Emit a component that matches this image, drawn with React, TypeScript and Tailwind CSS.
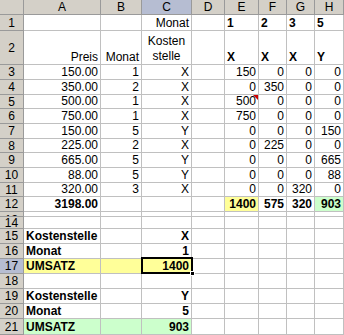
import React from 'react';

type Cell = { v?: string; a?: 'l' | 'r' | 'c'; b?: boolean; bg?: string; note?: boolean; sel?: boolean; wrap?: boolean };
type Row = { n: string; h: string; cells: Record<string, Cell>; hl?: boolean; clip?: 'top' | 'bottom' };

const COLS = ['A', 'B', 'C', 'D', 'E', 'F', 'G', 'H'];

const YELLOW = 'bg-[#ffff99]';
const GREEN = 'bg-[#ccffcc]';

const prices = ['150.00', '350.00', '500.00', '750.00', '150.00', '225.00', '665.00', '88.00', '320.00'];
const months = ['1', '2', '1', '1', '5', '2', '5', '5', '3'];
const kst = ['X', 'X', 'X', 'X', 'Y', 'X', 'Y', 'Y', 'X'];
const e = ['150', '0', '500', '750', '0', '0', '0', '0', '0'];
const f = ['0', '350', '0', '0', '0', '225', '0', '0', '0'];
const g = ['0', '0', '0', '0', '0', '0', '0', '0', '320'];
const hh = ['0', '0', '0', '0', '150', '0', '665', '88', '0'];
const dataHeights = ['h-[15px]', 'h-[15px]', 'h-[14px]', 'h-[15px]', 'h-[15px]', 'h-[14px]', 'h-[15px]', 'h-[15px]', 'h-[14px]'];

const rows: Row[] = [
  {
    n: '1',
    h: 'h-[16px]',
    cells: {
      C: { v: 'Monat', a: 'r' },
      E: { v: '1', a: 'l', b: true },
      F: { v: '2', a: 'l', b: true },
      G: { v: '3', a: 'l', b: true },
      H: { v: '5', a: 'l', b: true },
    },
  },
  {
    n: '2',
    h: 'h-[34px]',
    cells: {
      A: { v: 'Preis', a: 'r' },
      B: { v: 'Monat', a: 'r' },
      C: { v: 'Kosten stelle', a: 'c', wrap: true },
      E: { v: 'X', a: 'l', b: true },
      F: { v: 'X', a: 'l', b: true },
      G: { v: 'X', a: 'l', b: true },
      H: { v: 'Y', a: 'l', b: true },
    },
  },
  ...prices.map((p, i) => ({
    n: String(i + 3),
    h: dataHeights[i],
    cells: {
      A: { v: p, a: 'r' as const },
      B: { v: months[i], a: 'r' as const },
      C: { v: kst[i], a: 'r' as const },
      E: { v: e[i], a: 'r' as const, note: i === 2 },
      F: { v: f[i], a: 'r' as const },
      G: { v: g[i], a: 'r' as const },
      H: { v: hh[i], a: 'r' as const },
    },
  })),
  {
    n: '12',
    h: 'h-[15px]',
    cells: {
      A: { v: '3198.00', a: 'r', b: true },
      E: { v: '1400', a: 'r', b: true, bg: YELLOW },
      F: { v: '575', a: 'r', b: true },
      G: { v: '320', a: 'r', b: true },
      H: { v: '903', a: 'r', b: true, bg: GREEN },
    },
  },
  // rows 13 and 14 are only partly visible
  { n: '13', h: 'h-[5px]', cells: {}, clip: 'top' },
  { n: '14', h: 'h-[12px]', cells: {}, clip: 'bottom' },
  { n: '15', h: 'h-[15px]', cells: { A: { v: 'Kostenstelle', b: true }, C: { v: 'X', a: 'r', b: true } } },
  { n: '16', h: 'h-[15px]', cells: { A: { v: 'Monat', b: true }, C: { v: '1', a: 'r', b: true } } },
  {
    n: '17',
    h: 'h-[15px]',
    hl: true,
    cells: {
      A: { v: 'UMSATZ', b: true, bg: YELLOW },
      B: { bg: YELLOW },
      C: { v: '1400', a: 'r', b: true, bg: YELLOW, sel: true },
    },
  },
  { n: '18', h: 'h-[15px]', cells: {} },
  { n: '19', h: 'h-[15px]', cells: { A: { v: 'Kostenstelle', b: true }, C: { v: 'Y', a: 'r', b: true } } },
  { n: '20', h: 'h-[15px]', cells: { A: { v: 'Monat', b: true }, C: { v: '5', a: 'r', b: true } } },
  {
    n: '21',
    h: 'h-[16px]',
    cells: {
      A: { v: 'UMSATZ', b: true, bg: GREEN },
      B: { bg: GREEN },
      C: { v: '903', a: 'r', b: true, bg: GREEN },
    },
  },
];

const widths: Record<string, string> = {
  A: 'w-[77px]',
  B: 'w-[41px]',
  C: 'w-[50px]',
  D: 'w-[33px]',
  E: 'w-[34px]',
  F: 'w-[28px]',
  G: 'w-[28px]',
  H: 'w-[29px]',
};

const justify = { l: 'justify-start', r: 'justify-end', c: 'justify-center' };

function DataCell({ col, cell }: { col: string; cell?: Cell }) {
  const c = cell ?? {};
  return (
    <div
      className={`relative flex shrink-0 items-end px-[2px] border-r border-b border-[#c0c0c0] ${widths[col]} ${
        justify[c.a ?? 'l']
      } ${c.bg ?? 'bg-white'} ${c.b ? 'font-bold' : ''}`}
    >
      {c.wrap ? (
        <span className="w-full text-center leading-[15px] whitespace-normal">{c.v}</span>
      ) : (
        <span className="relative z-[1] leading-[14px] whitespace-nowrap">{c.v}</span>
      )}
      {c.note && (
        <span className="absolute top-0 right-0 w-0 h-0 border-l-[5px] border-l-transparent border-t-[5px] border-t-[#d00000]" />
      )}
      {c.sel && (
        <>
          <span className="absolute -top-[2px] -left-[1px] -right-[2px] -bottom-[1px] z-10 border-[2px] border-black pointer-events-none" />
          <span className="absolute -right-[4px] -bottom-[3px] z-20 w-[5px] h-[5px] bg-black border border-white" />
        </>
      )}
    </div>
  );
}

export default function App() {
  return (
    <div className="w-[344px] h-[335px] overflow-hidden bg-white font-['Liberation_Sans',Arial,sans-serif] text-[12px] text-black">
      {/* column headers */}
      <div className="flex h-[15px]">
        <div className="w-[24px] shrink-0 bg-[#d4d0c8] border-r border-b border-[#9a9a9a]" />
        {COLS.map((c) => (
          <div
            key={c}
            className={`flex shrink-0 items-center justify-center text-[12px] leading-none border-r border-b border-[#9a9a9a] ${widths[c]} ${
              c === 'C' ? 'bg-[#b6bdd2]' : 'bg-[#d4d0c8]'
            }`}
          >
            {c}
          </div>
        ))}
      </div>

      {rows.map((r) => (
        <div key={r.n} className={`flex ${r.h}`}>
          <div
            className={`flex w-[24px] shrink-0 justify-center overflow-hidden border-r border-b border-[#9a9a9a] ${
              r.hl ? 'bg-[#b6bdd2]' : 'bg-[#d4d0c8]'
            } ${r.clip === 'top' ? 'items-start' : r.clip === 'bottom' ? 'items-end' : 'items-center'}`}
          >
            <span
              className={`leading-[14px] ${r.clip === 'top' ? 'mt-[1px]' : ''} ${r.clip === 'bottom' ? '-mb-[2px]' : ''}`}
            >
              {r.n}
            </span>
          </div>
          {COLS.map((c) => (
            <DataCell key={c} col={c} cell={r.cells[c]} />
          ))}
        </div>
      ))}
    </div>
  );
}
